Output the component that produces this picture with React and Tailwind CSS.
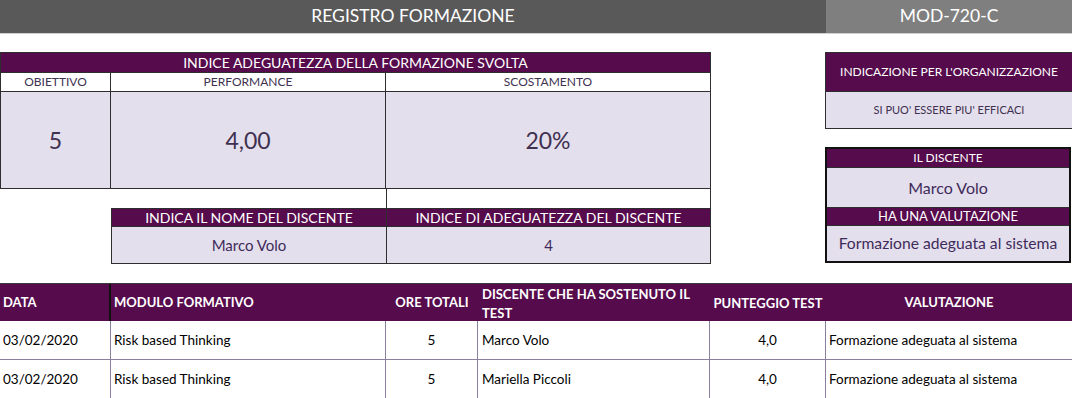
import React from "react";

const F = { fontFamily: "Lato, 'Open Sans', sans-serif" };

export default function App() {
  return (
    <div className="w-[1072px] h-[398px] overflow-hidden bg-white" style={F}>
      {/* Top bar */}
      <div className="flex h-[33px] border-b border-[#d0d0d0] box-content">
        <div className="w-[826px] bg-[#595959] flex items-center justify-center text-white text-[17.5px]">
          REGISTRO FORMAZIONE
        </div>
        <div className="flex-1 bg-[#7f7f7f] flex items-center justify-center text-white text-[17.5px]">
          MOD-720-C
        </div>
      </div>

      {/* Middle */}
      <div className="flex mt-[18px] h-[212px]">
        {/* Left block */}
        <div className="w-[711px] flex flex-col">
          <div className="border border-[#2e2e2e]">
            <div className="h-[20px] bg-[#560b4c] text-white text-[14px] flex items-center justify-center border-b border-[#2e2e2e]">
              INDICE ADEGUATEZZA DELLA FORMAZIONE SVOLTA
            </div>
            <div className="flex h-[19px] border-b border-[#2e2e2e] text-[12px] text-[#403151]">
              <div className="w-[110px] border-r border-[#2e2e2e] flex items-center justify-center">OBIETTIVO</div>
              <div className="w-[275px] border-r border-[#2e2e2e] flex items-center justify-center">PERFORMANCE</div>
              <div className="flex-1 flex items-center justify-center">SCOSTAMENTO</div>
            </div>
            <div className="flex h-[96px] bg-[#e4dfec] text-[23px] text-[#403151]">
              <div className="w-[110px] border-r border-[#2e2e2e] flex items-center justify-center">5</div>
              <div className="w-[275px] border-r border-[#2e2e2e] flex items-center justify-center">4,00</div>
              <div className="flex-1 flex items-center justify-center">20%</div>
            </div>
          </div>
          <div className="flex ml-[111px]">
            <div className="w-[275px] flex flex-col">
              <div className="h-[19px]" />
              <div className="h-[19px] bg-[#560b4c] text-white text-[14px] flex items-center justify-center border-l border-t border-b border-[#2e2e2e]">
                INDICA IL NOME DEL DISCENTE
              </div>
              <div className="h-[37px] bg-[#e4dfec] text-[#3f2b5b] text-[15px] flex items-center justify-center border-l border-b border-[#2e2e2e]">
                Marco Volo
              </div>
            </div>
            <div className="flex-1 flex flex-col border-l border-r border-[#2e2e2e]">
              <div className="h-[19px] bg-white" />
              <div className="h-[19px] bg-[#560b4c] text-white text-[14px] flex items-center justify-center border-t border-b border-[#2e2e2e]">
                INDICE DI ADEGUATEZZA DEL DISCENTE
              </div>
              <div className="h-[37px] bg-[#e4dfec] text-[#3f2b5b] text-[15px] flex items-center justify-center border-b border-[#2e2e2e]">
                4
              </div>
            </div>
          </div>
        </div>

        {/* Right block */}
        <div className="ml-[114px] w-[247px] flex flex-col">
          <div className="border border-[#2e2e2e] border-r-0">
            <div className="h-[39px] bg-[#560b4c] text-white text-[12px] flex items-center justify-center border-b border-[#2e2e2e]">
              INDICAZIONE PER L'ORGANIZZAZIONE
            </div>
            <div className="h-[36px] bg-[#e4dfec] text-[#403151] text-[11px] flex items-center justify-center">
              SI PUO' ESSERE PIU' EFFICACI
            </div>
          </div>
          <div className="mt-[18px] border-2 border-[#111] w-[246px]">
            <div className="h-[19px] bg-[#560b4c] text-white text-[12px] flex items-center justify-center border-b border-[#2e2e2e]">
              IL DISCENTE
            </div>
            <div className="h-[40px] bg-[#e4dfec] text-[#3f2b5b] text-[16px] flex items-center justify-center border-b border-[#2e2e2e]">
              Marco Volo
            </div>
            <div className="h-[18px] bg-[#560b4c] text-white text-[13px] flex items-center justify-center border-b border-[#2e2e2e]">
              HA UNA VALUTAZIONE
            </div>
            <div className="h-[35px] bg-[#e4dfec] text-[#3f2b5b] text-[15.7px] flex items-center justify-center">
              Formazione adeguata al sistema
            </div>
          </div>
        </div>
      </div>

      {/* Table */}
      <div className="mt-[19px] border-t border-[#3a3a3a]">
        <div className="flex h-[37px] bg-[#560b4c] text-white text-[13px] font-bold">
          <div className="w-[111px] border-r-2 border-[#111] flex items-center pl-[3px]">DATA</div>
          <div className="w-[275px] flex items-center pl-[3px]">MODULO FORMATIVO</div>
          <div className="w-[92px] flex items-center justify-center">ORE TOTALI</div>
          <div className="w-[232px] flex items-start pt-[1px] pl-[4px] leading-[19px] overflow-hidden">
            <span className="max-w-[215px]">DISCENTE CHE HA SOSTENUTO IL TEST</span>
          </div>
          <div className="w-[116px] flex items-center justify-center pt-[2px]">PUNTEGGIO TEST</div>
          <div className="flex-1 flex items-center justify-center">VALUTAZIONE</div>
        </div>
        {["Marco Volo", "Mariella Piccoli"].map((n) => (
          <div key={n} className="flex h-[39px] text-[13.5px] text-black border-b border-[#8b7fa0]">
            <div className="w-[111px] border-r border-[#8b7fa0] flex items-center pl-[3px]">03/02/2020</div>
            <div className="w-[275px] border-r border-[#8b7fa0] flex items-center pl-[3px]">Risk based Thinking</div>
            <div className="w-[92px] border-r border-[#8b7fa0] flex items-center justify-center">5</div>
            <div className="w-[232px] border-r border-[#8b7fa0] flex items-center pl-[4px]">{n}</div>
            <div className="w-[116px] border-r border-[#8b7fa0] flex items-center justify-center">4,0</div>
            <div className="flex-1 flex items-center pl-[3px]">Formazione adeguata al sistema</div>
          </div>
        ))}
      </div>
    </div>
  );
}
